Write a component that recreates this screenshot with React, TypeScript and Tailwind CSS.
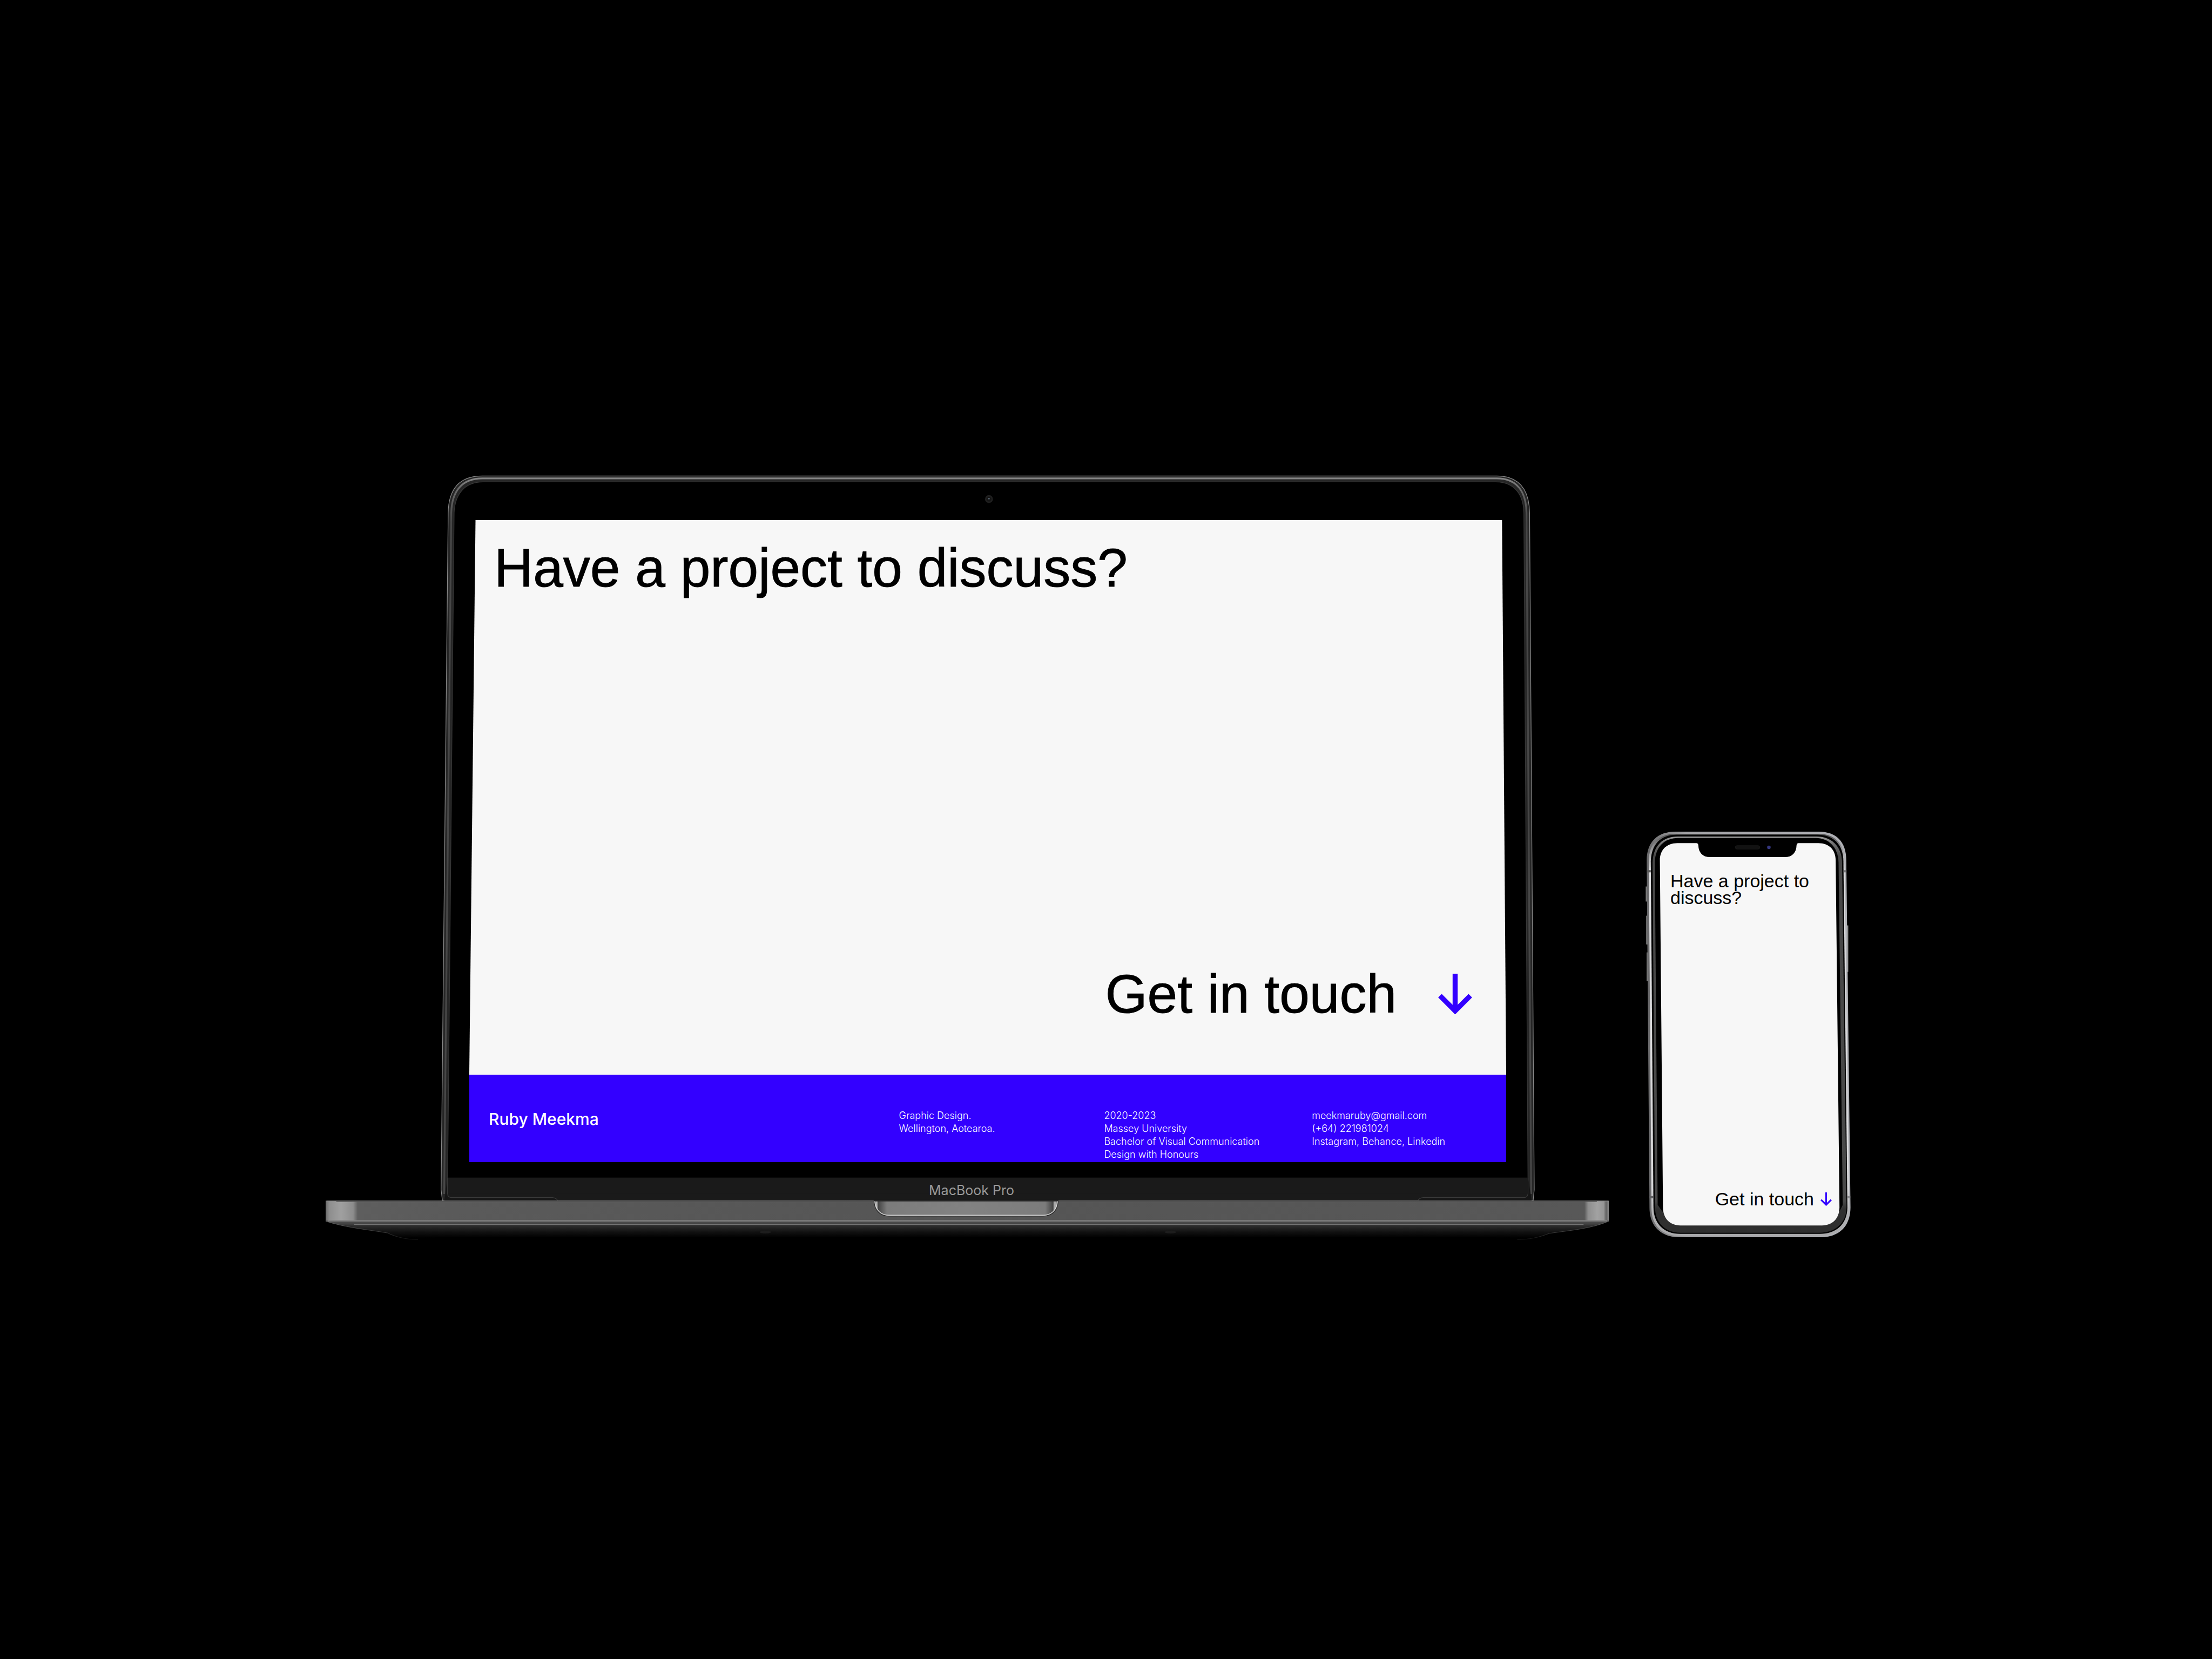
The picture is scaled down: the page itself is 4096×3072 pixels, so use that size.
import type { ReactNode } from "react";

function DownArrow({ className }: { className: string }) {
  return (
    <svg viewBox="0 0 77 92" className={className} fill="none" stroke="#3300ff" strokeWidth="11.5" aria-hidden="true">
      <path d="M38.5 0V84" />
      <path d="M4 50L38.5 84.5L73 50" />
    </svg>
  );
}

function LaptopBody() {
  return (
    <svg viewBox="736 1076 2901 1728" className="absolute inset-0 size-full overflow-visible" aria-hidden="true">
      <defs>
        <linearGradient id="lidEdge" gradientUnits="userSpaceOnUse" x1="0" y1="1076" x2="0" y2="1180">
          <stop offset="0" stopColor="#8a8a8a" />
          <stop offset="0.3" stopColor="#6a6a6a" />
          <stop offset="1" stopColor="#474747" />
        </linearGradient>
        <linearGradient id="baseFront" gradientUnits="userSpaceOnUse" x1="736" y1="0" x2="3637" y2="0">
          <stop offset="0" stopColor="#6c6c6c" />
          <stop offset="0.003" stopColor="#8e8e8e" />
          <stop offset="0.012" stopColor="#a0a0a0" />
          <stop offset="0.0215" stopColor="#8c8c8c" />
          <stop offset="0.025" stopColor="#5e5e5e" />
          <stop offset="0.1" stopColor="#5a5a5a" />
          <stop offset="0.5" stopColor="#555555" />
          <stop offset="0.981" stopColor="#585858" />
          <stop offset="0.984" stopColor="#8e8e8e" />
          <stop offset="0.991" stopColor="#a2a2a2" />
          <stop offset="0.996" stopColor="#969696" />
          <stop offset="0.998" stopColor="#636363" />
          <stop offset="1" stopColor="#8a8a8a" />
        </linearGradient>
        <linearGradient id="underside" gradientUnits="userSpaceOnUse" x1="0" y1="2759" x2="0" y2="2803">
          <stop offset="0" stopColor="#555555" />
          <stop offset="0.2" stopColor="#414141" />
          <stop offset="0.3" stopColor="#2c2c2c" />
          <stop offset="0.6" stopColor="#121212" />
          <stop offset="0.9" stopColor="#000000" />
        </linearGradient>
        <linearGradient id="undersideRim" gradientUnits="userSpaceOnUse" x1="0" y1="2759" x2="0" y2="2803">
          <stop offset="0" stopColor="#6b6b6b" />
          <stop offset="0.6" stopColor="#4a4a4a" />
          <stop offset="1" stopColor="#161616" />
        </linearGradient>
        <linearGradient id="thumbScoop" gradientUnits="userSpaceOnUse" x1="1976" y1="0" x2="2392" y2="0">
          <stop offset="0" stopColor="#555555" />
          <stop offset="0.015" stopColor="#bdbdbd" />
          <stop offset="0.022" stopColor="#454545" />
          <stop offset="0.07" stopColor="#7c7c7c" />
          <stop offset="0.5" stopColor="#828282" />
          <stop offset="0.93" stopColor="#7c7c7c" />
          <stop offset="0.972" stopColor="#454545" />
          <stop offset="0.982" stopColor="#bdbdbd" />
          <stop offset="1" stopColor="#666666" />
        </linearGradient>
      </defs>

      {/* lid */}
      <path
        d="M1000 2715L997 2690L1013 1160C1014 1105 1040 1076.5 1090 1076.5H3384C3432 1076.5 3457 1105 3458 1160L3468.5 2690L3466 2715Z"
        fill="#262626"
        stroke="#8a8a8a"
        strokeWidth="1.5"
      />
      <path
        d="M1004 2700L1004 2690L1020 1160C1021 1110 1045 1082 1090 1082H3384C3428 1082 3450 1110 3451 1160L3461.5 2690V2700"
        fill="none"
        stroke="url(#lidEdge)"
        strokeWidth="4"
      />
      <path
        d="M1011.5 2700L1026.5 1160C1028 1118 1050 1090 1092 1090H3381C3424 1090 3444 1118 3445 1160L3454.5 2700Z"
        fill="#000"
        stroke="#383838"
        strokeWidth="1.5"
      />

      {/* camera */}
      <circle cx="2235.7" cy="1128.7" r="9" fill="#1f1f1f" />
      <circle cx="2235.7" cy="1128.7" r="5.5" fill="#141414" />
      <circle cx="2235.7" cy="1128" r="1.8" fill="#5a6672" />

      {/* chin and hinges */}
      <path d="M1011.5 2663H3454.5V2715H1020Q1011.5 2712 1011.5 2700Z" fill="#1a1a1a" />
      <path d="M1011.5 2663V2699Q1012 2708 1021 2708H1249Q1259 2709 1261 2716H1004Z" fill="#151515" />
      <path d="M1011.5 2663V2699Q1012 2708 1021 2708H1249Q1259 2709 1261 2716" fill="none" stroke="#3a3a3a" strokeWidth="1.5" />
      <path d="M3454.5 2663V2698Q3454 2708 3445 2708H3217Q3207 2709 3205 2716H3463Z" fill="#151515" />
      <path d="M3454.5 2663V2698Q3454 2708 3445 2708H3217Q3207 2709 3205 2716" fill="none" stroke="#3a3a3a" strokeWidth="1.5" />
      <rect x="1012" y="2663" width="2442" height="36" fill="#1a1a1a" />

      {/* base */}
      <path
        d="M736 2759H3637V2762C3600 2778 3550 2782 3502 2789C3480 2798 3455 2803 3430 2803C3400 2803 3390 2799 3375 2798H985C970 2802 960 2803 945 2803C915 2803 890 2795 876 2788C830 2780 780 2776 736 2762Z"
        fill="url(#underside)"
      />
      <path d="M736 2761C780 2776 830 2780 876 2788C890 2795 915 2803 945 2803" fill="none" stroke="url(#undersideRim)" />
      <path d="M3637 2761C3600 2778 3550 2782 3502 2789C3480 2798 3455 2803 3430 2803" fill="none" stroke="url(#undersideRim)" />
      <rect x="736" y="2715" width="2901" height="45" fill="url(#baseFront)" />
      <rect x="738" y="2715" width="2898" height="1.5" fill="#8c8c8c" />
      <rect x="760" y="2716.5" width="2850" height="1.5" fill="#3e3e3e" />
      <rect x="741" y="2759" width="2892" height="3" fill="#808080" />
      <rect x="800" y="2768" width="2780" height="1.5" fill="#747474" />
      <ellipse cx="2646" cy="2786" rx="13" ry="3" fill="#1d1d1d" />
      <ellipse cx="1730" cy="2786" rx="13" ry="3" fill="#1d1d1d" />

      {/* thumb scoop */}
      <path
        d="M1976 2715H2392C2391 2738 2378 2749.5 2358 2749.5H2010C1990 2749.5 1977 2738 1976 2715Z"
        fill="url(#thumbScoop)"
        stroke="#2c2c2c"
        strokeWidth="2"
      />
      <path
        d="M1977.5 2716C1979 2737 1992 2748 2010 2748H2358C2376 2748 2389 2737 2390.5 2716"
        fill="none"
        stroke="#d6d6d6"
        strokeWidth="2"
      />
      <rect x="1977" y="2714.5" width="414" height="2" fill="#2a2a2a" />
    </svg>
  );
}

function PhoneBody() {
  return (
    <svg viewBox="3719 1880 464 917" className="absolute inset-0 size-full overflow-visible" aria-hidden="true">
      <defs>
        <linearGradient id="phoneRim" gradientUnits="userSpaceOnUse" x1="3719" y1="0" x2="4183" y2="0">
          <stop offset="0" stopColor="#646466" />
          <stop offset="0.1" stopColor="#8a8a8c" />
          <stop offset="0.2" stopColor="#a3a3a6" />
          <stop offset="1" stopColor="#b0b1b6" />
        </linearGradient>
        <linearGradient id="phoneSteel" gradientUnits="userSpaceOnUse" x1="0" y1="1884" x2="0" y2="2797">
          <stop offset="0" stopColor="#4a4a4a" />
          <stop offset="0.03" stopColor="#8a8a8c" />
          <stop offset="0.09" stopColor="#dcdcde" />
          <stop offset="0.88" stopColor="#d8d8da" />
          <stop offset="0.94" stopColor="#b2b2b4" />
          <stop offset="1" stopColor="#a8a8aa" />
        </linearGradient>
        <linearGradient id="phoneGlass" gradientUnits="userSpaceOnUse" x1="0" y1="1891" x2="0" y2="2787">
          <stop offset="0" stopColor="#9a9a9a" />
          <stop offset="0.02" stopColor="#6d6d6d" />
          <stop offset="0.05" stopColor="#484848" />
          <stop offset="0.92" stopColor="#484848" />
          <stop offset="0.94" stopColor="#303030" />
          <stop offset="1" stopColor="#2e2e2e" />
        </linearGradient>
      </defs>

      {/* side buttons */}
      <rect x="3719.5" y="2004" width="5" height="34" fill="#7b7b7b" />
      <rect x="3720.5" y="2070" width="5" height="65" fill="#7b7b7b" />
      <rect x="3721.5" y="2153" width="5" height="65" fill="#7b7b7b" />
      <rect x="4172" y="2092" width="5.5" height="105" fill="#8c8c8c" />

      {/* frame */}
      <path
        d="M3721.7 1945C3722 1902 3747 1880 3787 1880H4110C4150 1880 4173 1902 4173 1945L4182.5 2730C4182 2773 4157 2797 4115 2797H3795C3755 2797 3728 2773 3728 2730Z"
        fill="url(#phoneRim)"
      />
      <path
        d="M3726.5 1946C3727 1906 3750 1885 3788 1885H4109C4147 1885 4168.5 1906 4169 1946L4179.5 2730C4179 2771 4154 2794 4114 2794H3796C3757 2794 3732 2771 3732.5 2730Z"
        fill="url(#phoneSteel)"
      />
      <path
        d="M3731 1947C3732 1908 3754 1887 3789 1887H4108C4143 1887 4166 1908 4166.5 1947L4175.5 2730C4175 2768 4150 2789.5 4113 2789.5H3797C3762 2789.5 3737.5 2768 3737 2730Z"
        fill="#000"
      />
      <path
        d="M3735 1950C3736 1912 3758 1891 3792 1891H4106C4138 1891 4163 1912 4163.5 1950L4173.5 2730C4173 2765 4148 2787 4112 2787H3798C3764 2787 3741 2765 3740.5 2730Z"
        fill="url(#phoneGlass)"
      />
      <path
        d="M3740 1950C3741 1914 3762 1894.5 3793 1894.5H4104C4132 1894.5 4154.5 1914 4155.5 1950L4165 2724L4157 2740H3758L3746.5 2724Z"
        fill="#000"
      />

      {/* antenna lines */}
      <rect x="3722" y="1967" width="9" height="5" fill="#5a5a5a" />
      <rect x="4168" y="1967" width="5.5" height="5" fill="#77777a" />
      <rect x="3728" y="2704" width="9" height="5" fill="#5f5f61" />
      <rect x="4176" y="2704" width="6" height="5" fill="#8b8b8e" />

      {/* display with notch */}
      <path
        d="M3751.5 1945C3751.5 1921 3767 1906 3791 1906H3834Q3838 1906 3838.5 1911C3839 1927 3848 1937.5 3865 1937.5H4034C4051 1937.5 4060 1927 4060.5 1911Q4061 1906 4065 1906H4110C4134 1906 4149 1921 4149 1945L4157.6 2730C4157 2755 4142 2770.5 4118 2770.5H3798C3774 2770.5 3759 2755 3758.5 2730Z"
        fill="#f7f7f7"
      />
      <rect x="3922" y="1911.5" width="55.5" height="8" rx="4" fill="#121212" stroke="#1c1c1c" />
      <circle cx="3998" cy="1915.3" r="4" fill="#34367f" />
    </svg>
  );
}

function FooterLink({ href, children }: { href: string; children: ReactNode }) {
  return (
    <a href={href} className="text-inherit">
      {children}
    </a>
  );
}

function Laptop() {
  return (
    <figure className="relative aspect-[2901/1728]">
      <LaptopBody />
      <div className="relative flex flex-col pt-[82px] pr-[190px] pl-[266px]">
        <div className="flex flex-col [clip-path:polygon(0.6%_0,99.6%_0,100%_86%,100%_100%,0_100%,0_86%)]">
          <section className="flex min-h-[1027px] flex-col justify-between bg-[#f7f7f7] pt-[38px] pr-[63px] pb-[100px] pl-[46px] font-['Liberation_Sans',Arial,sans-serif] text-[100px] leading-[100px] text-black [-webkit-text-stroke:1px_black]">
            <h1>Have a project to discuss?</h1>
            <a href="#contact" className="flex items-center gap-[77px] self-end">
              Get in touch
              <DownArrow className="h-[75px] w-[63px]" />
            </a>
          </section>
          <footer
            id="contact"
            className="grid min-h-[162px] grid-cols-[760fr_380fr_385fr_360fr] bg-[#3300ff] pt-16 pl-9 text-[18px] leading-[24px] font-light text-white"
          >
            <p className="text-[30px] leading-[36px] font-medium">Ruby Meekma</p>
            <p>
              Graphic Design.
              <br />
              Wellington, Aotearoa.
            </p>
            <p>
              2020-2023
              <br />
              Massey University
              <br />
              Bachelor of Visual Communication
              <br />
              Design with Honours
            </p>
            <address className="not-italic">
              <FooterLink href="mailto:meekmaruby@gmail.com">meekmaruby@gmail.com</FooterLink>
              <br />
              <FooterLink href="tel:+64221981024">(+64) 221981024</FooterLink>
              <br />
              <FooterLink href="#instagram">Instagram</FooterLink>, <FooterLink href="#behance">Behance</FooterLink>,{" "}
              <FooterLink href="#linkedin">Linkedin</FooterLink>
            </address>
          </footer>
        </div>
      </div>
      <figcaption className="relative mt-10 pl-4 text-center text-[25px] leading-[24px] text-[#999999]">
        MacBook Pro
      </figcaption>
    </figure>
  );
}

function Phone() {
  return (
    <div className="relative mb-[5px] aspect-[464/917]">
      <PhoneBody />
      <div className="relative pt-[21px] pr-[20px] pl-[26px]">
        <div className="flex min-h-[708px] flex-col justify-between pt-[55px] pr-[15px] pb-[33px] pl-[20px] font-['Liberation_Sans',Arial,sans-serif] text-[34px] leading-[31px] text-black">
          <h2>Have a project to discuss?</h2>
          <a href="#contact" className="flex items-center gap-[12px] self-end">
            Get in touch
            <DownArrow className="h-[25px] w-[21px]" />
          </a>
        </div>
      </div>
    </div>
  );
}

export default function App() {
  return (
    <main className="grid min-h-screen grid-cols-[603fr_2376fr_68fr_380fr_669fr] content-start items-end bg-black pt-[881px] font-['Inter','Liberation_Sans',sans-serif]">
      <div className="col-start-2">
        <Laptop />
      </div>
      <div className="col-start-4">
        <Phone />
      </div>
    </main>
  );
}
